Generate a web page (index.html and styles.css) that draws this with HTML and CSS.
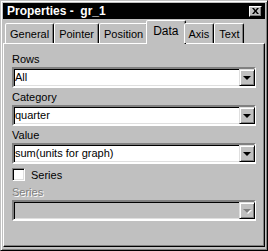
FILE: index.html
```html
<!DOCTYPE html>
<html lang="en">

<head>
    <meta charset="UTF-8">
    <title>Properties - gr_1</title>
    <link rel="stylesheet" href="styles.css">
</head>

<body>
    <div class="window">
        <div class="titlebar">
            <span class="title">Properties -  gr_1</span>
            <span class="close-btn">
                <svg width="7" height="6" viewBox="0 0 7 6">
                    <path d="M0 0h2l1.5 2 1.5-2h2l-2.5 3 2.5 3h-2l-1.5-2-1.5 2h-2l2.5-3z" fill="#000"/>
                </svg>
            </span>
        </div>

        <div class="tabs">
            <div class="tab">General</div>
            <div class="tab">Pointer</div>
            <div class="tab">Position</div>
            <div class="tab active">Data</div>
            <div class="tab">Axis</div>
            <div class="tab">Text</div>
        </div>

        <div class="panel">
            <div class="label">Rows</div>
            <div class="combo">
                <span class="combo-text">All</span>
                <span class="combo-btn"><span class="arrow"></span></span>
            </div>

            <div class="label">Category</div>
            <div class="combo">
                <span class="combo-text">quarter</span>
                <span class="combo-btn"><span class="arrow"></span></span>
            </div>

            <div class="label">Value</div>
            <div class="combo">
                <span class="combo-text">sum(units for graph)</span>
                <span class="combo-btn"><span class="arrow"></span></span>
            </div>

            <label class="check-row">
                <span class="checkbox"></span>
                <span>Series</span>
            </label>

            <div class="label disabled">Series</div>
            <div class="combo disabled">
                <span class="combo-text"></span>
                <span class="combo-btn"><span class="arrow"></span></span>
            </div>
        </div>
    </div>
</body>
</html>
```

FILE: styles.css
```css
body {
    margin: 0;
    background-color: #c0c0c0;
    font-family: "Liberation Sans", Arial, sans-serif;
    font-size: 11px;
    color: #000;
}

.window {
    width: 268px;
    height: 251px;
    box-sizing: border-box;
    padding: 2px;
    background-color: #c0c0c0;
    border: 1px solid;
    border-color: #c0c0c0 #000 #000 #c0c0c0;
    box-shadow: inset 1px 1px #fff, inset -1px -1px #808080;
}

/* Title bar */
.titlebar {
    height: 16px;
    background-color: #000;
    color: #fff;
    display: flex;
    align-items: center;
    justify-content: space-between;
    padding: 0 3px 0 4px;
}

.title {
    font-weight: bold;
    font-size: 12px;
    white-space: pre;
}

.close-btn {
    width: 13px;
    height: 11px;
    box-sizing: border-box;
    background-color: #c0c0c0;
    border: 1px solid;
    border-color: #fff #000 #000 #fff;
    box-shadow: inset -1px -1px #808080;
    display: flex;
    align-items: center;
    justify-content: center;
}

/* Tabs */
.tabs {
    display: flex;
    align-items: flex-end;
    height: 24px;
    padding-left: 2px;
    position: relative;
    z-index: 1;
}

.tab {
    height: 20px;
    box-sizing: border-box;
    padding: 2px 4px 0;
    line-height: 16px;
    border: 1px solid;
    border-bottom: none;
    border-color: #fff #000 transparent #fff;
    box-shadow: inset -1px 0 #808080;
    border-radius: 2px 2px 0 0;
    background-color: #c0c0c0;
}

.tab.active {
    height: 24px;
    margin: 0 -2px -1px;
    padding: 2px 6px 0;
    font-size: 12px;
}

/* Panel */
.panel {
    height: 204px;
    box-sizing: border-box;
    padding: 9px 8px 0;
    border: 1px solid;
    border-color: #fff #000 #000 #fff;
    box-shadow: inset -1px -1px #808080;
}

.label {
    height: 13px;
    line-height: 13px;
    margin-bottom: 1px;
}

.label.disabled {
    color: #808080;
    text-shadow: 1px 1px #fff;
    margin-top: 5px;
}

.combo {
    height: 21px;
    box-sizing: border-box;
    border: 2px solid;
    border-color: #808080 #fff #fff #808080;
    box-shadow: inset 1px 1px #000, inset -1px -1px #dfdfdf;
    background-color: #fff;
    display: flex;
    align-items: center;
    justify-content: space-between;
    margin-bottom: 3px;
}

.combo.disabled {
    background-color: #c0c0c0;
}

.combo-text {
    padding-left: 1px;
    line-height: 17px;
}

.combo-btn {
    width: 16px;
    height: 17px;
    box-sizing: border-box;
    margin-right: -1px;
    background-color: #c0c0c0;
    border: 1px solid;
    border-color: #dfdfdf #000 #000 #dfdfdf;
    box-shadow: inset 1px 1px #fff, inset -1px -1px #808080;
    display: flex;
    align-items: center;
    justify-content: center;
}

.arrow {
    width: 0;
    height: 0;
    border-left: 4px solid transparent;
    border-right: 4px solid transparent;
    border-top: 4px solid #000;
    margin-top: 1px;
}

.combo.disabled .arrow {
    border-top-color: #808080;
    filter: drop-shadow(1px 1px 0 #fff);
}

/* Checkbox */
.check-row {
    display: flex;
    align-items: center;
    gap: 6px;
    margin-top: 4px;
    height: 13px;
}

.checkbox {
    width: 13px;
    height: 13px;
    box-sizing: border-box;
    border: 1px solid;
    border-color: #808080 #fff #fff #808080;
    box-shadow: inset 1px 1px #000, inset -1px -1px #dfdfdf;
    background-color: #fff;
}
```
